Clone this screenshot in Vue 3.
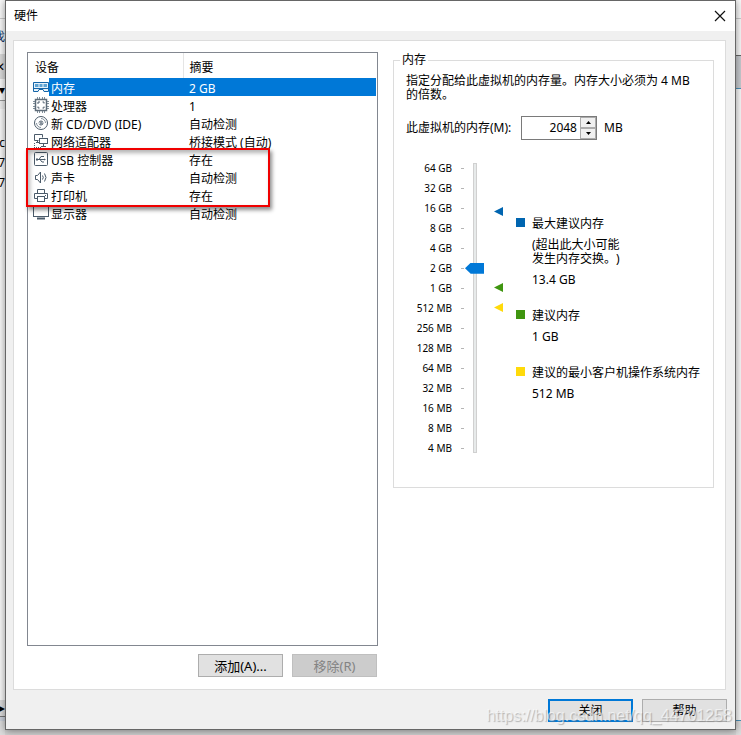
<script setup>
import { ref, computed } from 'vue'

const devices = [
  { icon: 'memory', name: '内存', summary: '2 GB' },
  { icon: 'cpu', name: '处理器', summary: '1' },
  { icon: 'disc', name: '新 CD/DVD (IDE)', summary: '自动检测' },
  { icon: 'network', name: '网络适配器', summary: '桥接模式 (自动)' },
  { icon: 'usb', name: 'USB 控制器', summary: '存在' },
  { icon: 'sound', name: '声卡', summary: '自动检测' },
  { icon: 'printer', name: '打印机', summary: '存在' },
  { icon: 'display', name: '显示器', summary: '自动检测' }
]

const scale = [
  '64 GB', '32 GB', '16 GB', '8 GB', '4 GB', '2 GB', '1 GB',
  '512 MB', '256 MB', '128 MB', '64 MB', '32 MB', '16 MB', '8 MB', '4 MB'
]

const markers = [
  { color: '#0065b0', top: 49 },
  { color: '#3f9510', top: 125 },
  { color: '#ffda0a', top: 145 }
]

const hints = [
  { color: '#0065b0', title: '最大建议内存', note: ['(超出此大小可能', '发生内存交换。)'], value: '13.4 GB' },
  { color: '#3f9510', title: '建议内存', value: '1 GB' },
  { color: '#ffda0a', title: '建议的最小客户机操作系统内存', value: '512 MB' }
]

const selected = ref(0)
const memory = ref(2048)

// slider works in powers of two, 4 MB is step 0
const level = computed({
  get: () => Math.round(Math.log2(memory.value / 4)),
  set: (v) => { memory.value = 4 * 2 ** v }
})

function step(n) {
  memory.value = Math.max(4, Math.min(65536, Number(memory.value) + n))
}
</script>

<template>
  <div class="desktop">
    <!-- windows behind the dialog -->
    <div class="behind left">
      <i class="l-top"></i>
      <i class="l-find">找</i>
      <i class="l-tab">✕</i>
      <i class="l-drop">▾</i>
      <i class="l-head"></i>
      <i class="l-cell">c</i>
      <i class="l-cell">7</i>
      <i class="l-cell">7</i>
      <i class="fill"></i>
      <i class="l-scroll">▸</i>
      <i class="l-status"></i>
    </div>
    <div class="behind right">
      <i class="l-top"></i>
      <i class="r-tool"></i>
      <i class="r-tab"></i>
      <i class="fill"></i>
      <i class="r-status"></i>
    </div>

    <div class="dialog">
      <header class="titlebar">
        <span>硬件</span>
        <button class="close" aria-label="关闭窗口">
          <svg width="12" height="12" viewBox="0 0 12 12"><path d="M1 1L11 11M11 1L1 11" stroke="#111" stroke-width="1.2" /></svg>
        </button>
      </header>

      <main class="panel">
        <section class="devices">
          <div class="list">
            <table>
              <thead>
                <tr><th class="col-icon"></th><th class="col-name">设备</th><th>摘要</th></tr>
              </thead>
              <tbody>
                <tr v-for="(item, index) in devices" :key="item.icon" :class="{ active: index === selected }" @click="selected = index">
                  <td class="icon">
                    <svg width="16" height="16" viewBox="0 0 16 16" fill="none" stroke="#4b5b6a">
                      <g v-if="item.icon === 'memory'" stroke="#1565a8">
                        <path d="M.5 3.5h15v9h-4.500l-1-2h-4l-1 2H.5z" fill="#e6f1f9" />
                        <path d="M2 6.500h3.500M6.500 6.500h3M10.500 6.500h3.500" stroke-width="3" stroke="#5fa3d3" />
                        <path d="M1 9.500h14" />
                      </g>
                      <g v-else-if="item.icon === 'cpu'">
                        <path d="M4.500 0v2M6.500 0v2M9.500 0v2M11.500 0v2M4.500 14v2M6.500 14v2M9.500 14v2M11.500 14v2M0 4.500h2M0 6.500h2M0 9.500h2M0 11.500h2M14 4.500h2M14 6.500h2M14 9.500h2M14 11.500h2" stroke="#83909b" />
                        <rect x="2.500" y="2.500" width="11" height="11" stroke="#5d6b78" stroke-width="1.500" />
                        <path d="M5 7V5h2M9.500 5H11v1.500M11 9.500V11H9.500M6.500 11H5V9.500" />
                      </g>
                      <g v-else-if="item.icon === 'disc'">
                        <circle cx="8" cy="8" r="6.500" />
                        <circle cx="8" cy="8" r="2" stroke-dasharray="5 1" />
                        <path d="M8 3.500A4.500 4.500 0 0 1 12.500 8M3.500 8A4.500 4.500 0 0 0 8 12.500" stroke="#83909b" />
                        <circle cx="8" cy="8" r=".5" fill="#4b5b6a" />
                      </g>
                      <g v-else-if="item.icon === 'network'">
                        <path d="M5.500 7.500h-4v-6h8v3M3 9.500h3M4.500 8v2" />
                        <rect x="6.500" y="5.500" width="8" height="5" fill="#fff" />
                        <path d="M10.500 11v2M8 13.500h5" />
                        <path d="M1.500 10v5M1 14.500h7" stroke-dasharray="1 1" />
                      </g>
                      <g v-else-if="item.icon === 'usb'">
                        <rect x="1.500" y="1.500" width="13" height="13" rx="1" />
                        <path d="M4 8.500h8M6 8.500L8 5.500h2M7 8.500l2 2.500h1" />
                        <path d="M3 7.500h2v2H3zM10 5h1v1h-1zM10 10.500h1v1h-1zM11 7.500l2 1-2 1z" fill="#4b5b6a" stroke="none" />
                      </g>
                      <g v-else-if="item.icon === 'sound'">
                        <path d="M2.500 6.500h2l3-3.500v11l-3-3.500h-2z" />
                        <path d="M9.500 6.500q1.500 2 0 4M11.500 4.500q3 4 0 8" />
                      </g>
                      <g v-else-if="item.icon === 'printer'">
                        <path d="M4.500 6V2.500h7V6M4 11.500H1.500v-5h13v5H12" />
                        <rect x="4.500" y="9.500" width="7" height="5" />
                        <path d="M12 8.500h1" />
                      </g>
                      <g v-else>
                        <rect x=".5" y="1.500" width="15" height="10" />
                        <path d="M4 13.500h8" stroke-width="2" />
                      </g>
                    </svg>
                  </td>
                  <td class="name">{{ item.name }}</td>
                  <td class="summary">{{ item.summary }}</td>
                </tr>
              </tbody>
            </table>
            <div class="highlight"></div>
          </div>
          <div class="list-actions">
            <button class="btn">添加(A)...</button>
            <button class="btn" disabled>移除(R)</button>
          </div>
        </section>

        <fieldset class="memory">
          <legend>内存</legend>
          <p class="desc">指定分配给此虚拟机的内存量。内存大小必须为 4 MB 的倍数。</p>
          <div class="amount">
            <label for="mem">此虚拟机的内存(M):</label>
            <div class="spin">
              <input id="mem" v-model.number="memory" type="text">
              <div class="arrows">
                <button aria-label="增加" @click="step(4)"><svg width="5" height="3" viewBox="0 0 5 3"><path d="M0 3L2.500 0L5 3z" /></svg></button>
                <button aria-label="减少" @click="step(-4)"><svg width="5" height="3" viewBox="0 0 5 3"><path d="M0 0L2.500 3L5 0z" /></svg></button>
              </div>
            </div>
            <span>MB</span>
          </div>

          <div class="chooser">
            <ul class="scale">
              <li v-for="s in scale" :key="s">{{ s }}</li>
            </ul>
            <input v-model.number="level" class="slider" type="range" min="0" max="14" aria-label="内存大小">
            <div class="markers">
              <svg v-for="m in markers" :key="m.color" :style="{ top: m.top + 'px' }" width="9" height="9" viewBox="0 0 9 9"><path d="M0 4.500L9 0V9z" :fill="m.color" /></svg>
            </div>
            <div class="hints">
              <div v-for="h in hints" :key="h.title" class="hint">
                <i class="swatch" :style="{ background: h.color }"></i>
                <span>{{ h.title }}</span>
                <span v-if="h.note" class="text">{{ h.note[0] }}<br>{{ h.note[1] }}</span>
                <span class="text">{{ h.value }}</span>
              </div>
            </div>
          </div>
        </fieldset>
      </main>

      <footer class="footer">
        <button class="btn primary">关闭</button>
        <button class="btn">帮助</button>
      </footer>
    </div>

    <div class="watermark">https://blog.csdn.net/qq_44701258</div>
  </div>
</template>

<style>
body {
  margin: 0;
  background: #f0f0f0;
}
</style>

<style scoped>
.desktop {
  position: relative;
  box-sizing: border-box;
  min-height: 100vh;
  padding: 0 5px 5px;
  display: flex;
  overflow: hidden;
  background: #d4d4d4;
  color: #000;
  font-family: "Noto Sans", "Noto Sans CJK SC", sans-serif;
  font-size: 12px;
  line-height: 14px;
  text-spacing-trim: space-all;
}
button, input {
  font: inherit;
  color: inherit;
  box-sizing: border-box;
  margin: 0;
  padding: 0;
}

/* background windows */
.behind {
  position: absolute;
  top: 0;
  bottom: 0;
  width: 5px;
  display: flex;
  flex-direction: column;
  overflow: hidden;
  background: #fafafa;
}
.behind i {
  box-sizing: border-box;
  display: flex;
  flex: none;
  align-items: center;
  justify-content: flex-end;
  font-style: normal;
}
.behind .fill { flex: 1; }
.left { left: 0; }
.right { right: 0; }
.l-top { height: 19px; border-bottom: 1px solid #ccc; }
.l-find { height: 35px; color: #123a6b; }
.l-tab { height: 25px; background: #dcdcdc; }
.l-drop { height: 22px; border-bottom: 1px solid #999; }
.l-head { height: 32px; border-top: 8px solid #eee; }
.l-cell { height: 20px; }
.l-scroll { height: 17px; background: #ddd; border-bottom: 1px solid #777; }
.l-status { height: 18px; background: #ddd; border-top: 4px solid #ccd2dc; }
.r-tool { height: 37px; border-bottom: 1px solid #666; }
.r-tab { height: 33px; background: #c9ccd0; border-bottom: 1px solid #4c93bb; }
.r-status { height: 15px; background: #ddd; border-top: 1px solid #4c93bb; }

.dialog {
  position: relative;
  flex: 1;
  min-width: 0;
  display: flex;
  flex-direction: column;
  border: 1px solid #666;
  background: #f0f0f0;
  box-shadow: 0 1px 8px rgba(0, 0, 0, 0.45);
}
.titlebar {
  display: flex;
  align-items: center;
  justify-content: space-between;
  height: 30px;
  padding: 0 8px;
  background: #fff;
}
.close {
  display: flex;
  padding: 1px;
  border: none;
  background: none;
}
.panel {
  flex: 1;
  display: grid;
  grid-template-columns: minmax(0, 351fr) minmax(0, 321fr);
  gap: 15px;
  margin: 9px 9px 0 7px;
  padding: 11px 11px 12px 13px;
  border: 1px solid #dcdcdc;
  background: #fff;
}

.devices {
  display: flex;
  flex-direction: column;
}
.list {
  position: relative;
  flex: 1;
  padding-right: 1px;
  border: 1px solid #828790;
}
table {
  width: 100%;
  table-layout: fixed;
  border-collapse: collapse;
}
th {
  height: 25px;
  padding: 4px 0 0 6px;
  box-sizing: border-box;
  font-weight: normal;
  text-align: left;
}
.col-icon { width: 21px; }
.col-name {
  width: 134px;
  padding-left: 0;
  border-right: 1px solid #e5e5e5;
}
th.col-name { text-indent: -14px; }
td {
  height: 18px;
  padding: 0;
  box-sizing: border-box;
  white-space: nowrap;
}
.icon { padding-left: 5px; }
.icon svg {
  display: block;
}
.name { padding: 3px 0 0 2px; }
.summary { padding: 3px 0 0 6px; }
.active .name, .active .summary {
  background: #0078d7;
  color: #fff;
}
.highlight {
  position: absolute;
  left: -2px;
  top: 95px;
  box-sizing: border-box;
  width: 244px;
  height: 59px;
  border: 2px solid #f00000;
  box-shadow: 2px 3px 4px rgba(0, 0, 0, 0.45), inset 2px 3px 4px rgba(0, 0, 0, 0.3);
  pointer-events: none;
}
.list-actions {
  display: flex;
  justify-content: flex-end;
  gap: 9px;
  margin: 8px 1px 0 0;
  font-size: 13px;
}
.btn {
  width: 85px;
  height: 23px;
  border: 1px solid #adadad;
  background: #e1e1e1;
}
.btn:disabled {
  border-color: #bfbfbf;
  background: #ccc;
  color: #838383;
}
.primary {
  border: 2px solid #0078d7;
}

.memory {
  align-self: start;
  min-width: 0;
  margin: 0;
  padding: 6px 12px 29px;
  border: 1px solid #dcdcdc;
}
legend {
  margin-left: -6px;
  padding: 0 2px;
  line-height: 16px;
}
.desc { margin: 0; }
.amount {
  display: flex;
  align-items: center;
  margin-top: 14px;
}
.amount label { min-width: 115px; }
.spin {
  display: flex;
  box-sizing: border-box;
  width: 76px;
  height: 24px;
  margin-right: 7px;
  border: 1px solid #7a7a7a;
}
.spin input {
  flex: 1;
  min-width: 0;
  padding-right: 3px;
  border: none;
  outline: none;
  background: #fff;
  text-align: right;
}
.arrows {
  display: flex;
  flex-direction: column;
  width: 16px;
}
.arrows button {
  flex: 1;
  display: flex;
  align-items: center;
  justify-content: center;
  border: 1px solid #acacac;
  background: #f0f0f0;
}

.chooser {
  display: flex;
  margin-top: 18px;
}
.scale {
  width: 58px;
  margin: 0;
  padding: 0;
  list-style: none;
  font-size: 10px;
}
.scale li {
  display: flex;
  align-items: center;
  justify-content: flex-end;
  gap: 9px;
  height: 20px;
  white-space: nowrap;
}
.scale li::after {
  content: "";
  width: 3px;
  height: 1px;
  background: #b5b5b5;
}
.slider {
  appearance: none;
  writing-mode: vertical-lr;
  direction: rtl;
  width: 19px;
  height: 290px;
  margin: 5px 10px 0 1px;
  background:
    linear-gradient(#e7eaea, #e7eaea) 9px 1px / 2px 288px no-repeat,
    linear-gradient(#d0d0d0, #d0d0d0) 8px 0 / 4px 290px no-repeat;
}
.slider::-webkit-slider-thumb {
  appearance: none;
  width: 19px;
  height: 11px;
  background: #0078d7;
  clip-path: polygon(0 50%, 30% 0, 100% 0, 100% 100%, 30% 100%);
}
.markers {
  position: relative;
  width: 9px;
  margin-right: 13px;
}
.markers svg {
  position: absolute;
  left: 0;
}
.hints {
  display: flex;
  flex-direction: column;
  gap: 22px;
  padding-top: 59px;
}
.hint {
  display: grid;
  grid-template-columns: 9px auto;
  gap: 7px;
  white-space: nowrap;
}
.swatch {
  width: 9px;
  height: 9px;
  margin-top: 1px;
}
.text { grid-column: 2; }

.footer {
  display: flex;
  justify-content: flex-end;
  gap: 9px;
  padding: 9px 8px 7px;
}
.watermark {
  position: absolute;
  right: 9px;
  bottom: 10px;
  color: rgba(255, 255, 255, 0.6);
  text-shadow: 1px 1px 1px rgba(120, 120, 120, 0.5);
  font: 16px/18px "Liberation Sans", sans-serif;
  pointer-events: none;
}
</style>
